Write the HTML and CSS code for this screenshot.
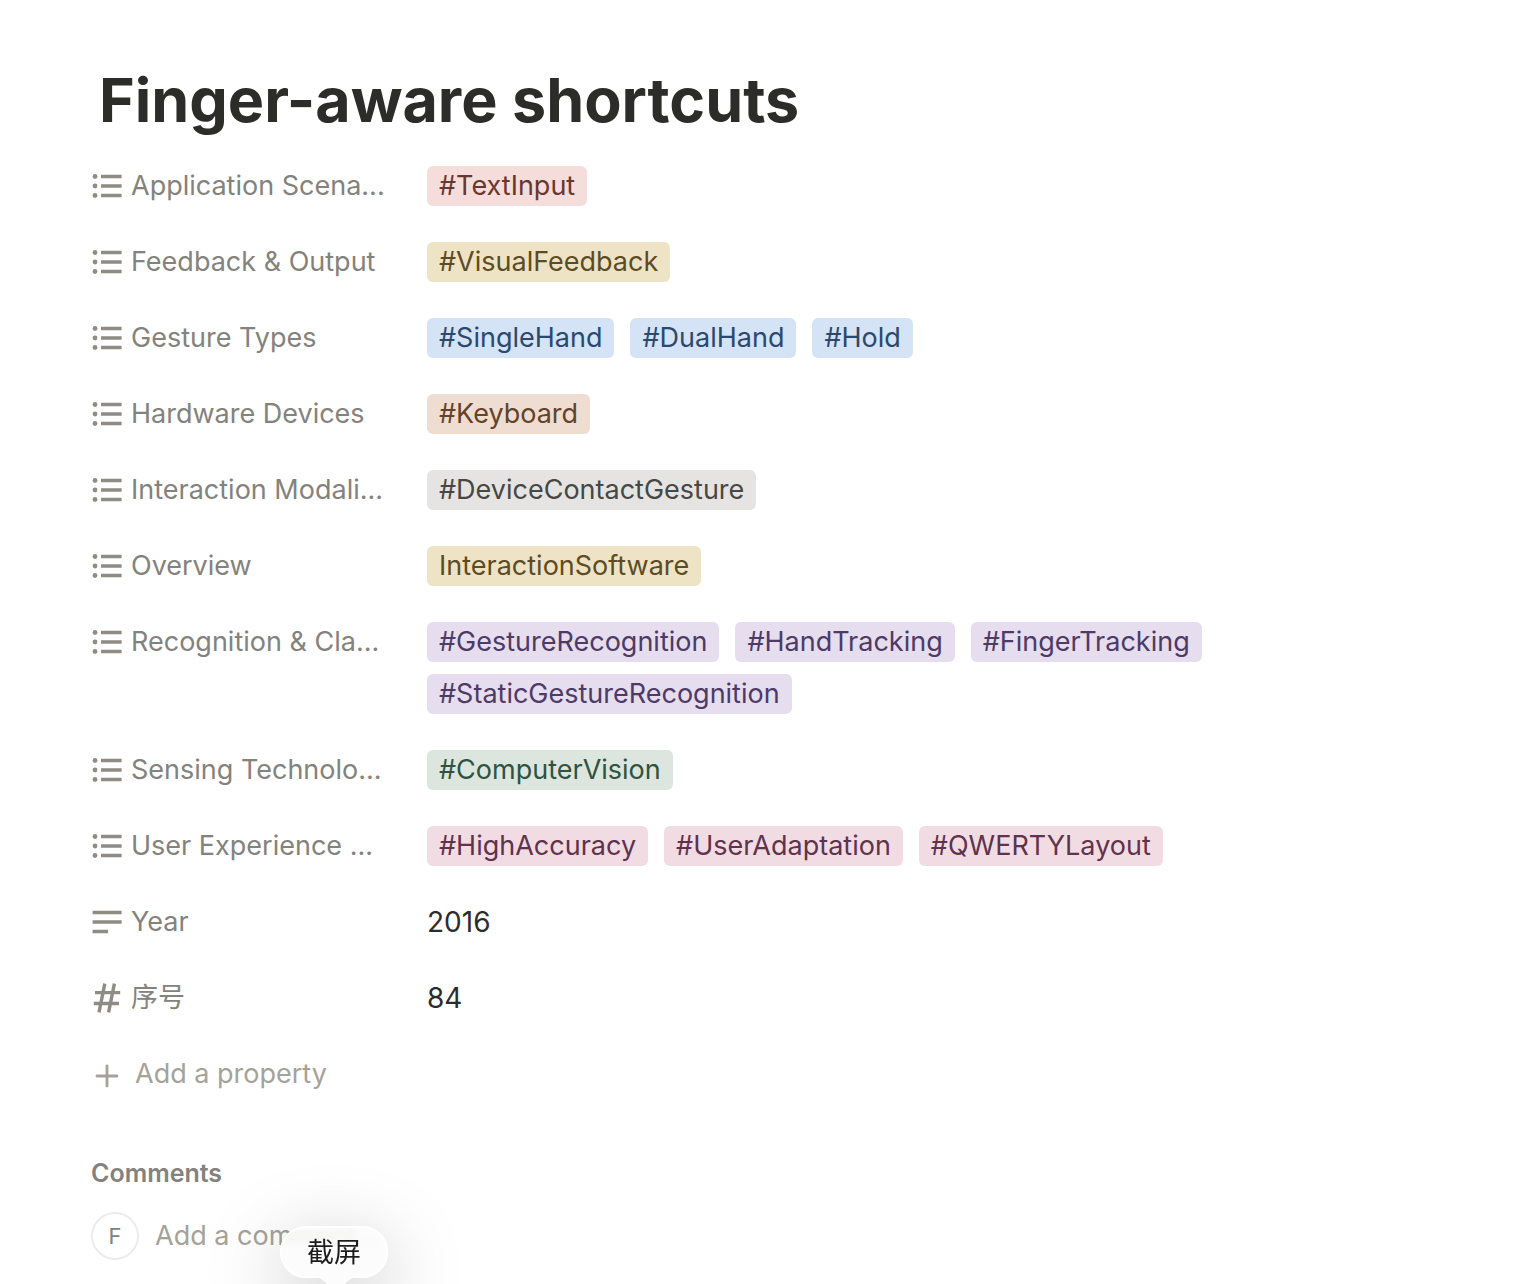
FILE: index.html
```html
<!DOCTYPE html>
<html lang="en">
<head>
<meta charset="utf-8">
<title>Finger-aware shortcuts</title>
<link rel="stylesheet" href="styles.css">
</head>
<body>
<svg class="sprite" aria-hidden="true">
  <symbol id="icon-list" viewBox="0 0 32 32">
    <circle cx="4" cy="6.5" r="2.4"/><circle cx="4" cy="16" r="2.4"/><circle cx="4" cy="25.5" r="2.4"/>
    <path d="M10 4.8h20.6v3.5H10zM10 14.3h20.6v3.5H10zM10 23.8h20.6v3.5H10z"/>
  </symbol>
  <symbol id="icon-text" viewBox="0 0 32 32">
    <path d="M1.6 4.8h29v3.5h-29zM1.6 14.3h29v3.5h-29zM1.6 23.8h15.4v3.5H1.6z"/>
  </symbol>
  <symbol id="icon-number" viewBox="0 0 32 32">
    <path d="M13.8 1.6 8 30.4M23.4 1.6l-5.8 28.8M4 10.6h25.2M2.8 21.5H28" fill="none" stroke="currentColor" stroke-width="3.4"/>
  </symbol>
  <symbol id="icon-plus" viewBox="0 0 32 32">
    <path d="M16 8v20M6 18h20" fill="none" stroke="currentColor" stroke-width="2.8" stroke-linecap="round"/>
  </symbol>
</svg>
<main class="page">
  <h1 class="title">Finger-aware shortcuts</h1>
  <dl class="properties">
    <div class="property">
      <dt class="name"><svg class="icon"><use href="#icon-list"/></svg>Application Scena...</dt>
      <dd class="value"><span class="tag red">#TextInput</span></dd>
    </div>
    <div class="property">
      <dt class="name"><svg class="icon"><use href="#icon-list"/></svg>Feedback &amp; Output</dt>
      <dd class="value"><span class="tag yellow">#VisualFeedback</span></dd>
    </div>
    <div class="property">
      <dt class="name"><svg class="icon"><use href="#icon-list"/></svg>Gesture Types</dt>
      <dd class="value"><span class="tag blue">#SingleHand</span><span class="tag blue">#DualHand</span><span class="tag blue">#Hold</span></dd>
    </div>
    <div class="property">
      <dt class="name"><svg class="icon"><use href="#icon-list"/></svg>Hardware Devices</dt>
      <dd class="value"><span class="tag orange">#Keyboard</span></dd>
    </div>
    <div class="property">
      <dt class="name"><svg class="icon"><use href="#icon-list"/></svg>Interaction Modali...</dt>
      <dd class="value"><span class="tag gray">#DeviceContactGesture</span></dd>
    </div>
    <div class="property">
      <dt class="name"><svg class="icon"><use href="#icon-list"/></svg>Overview</dt>
      <dd class="value"><span class="tag yellow">InteractionSoftware</span></dd>
    </div>
    <div class="property">
      <dt class="name"><svg class="icon"><use href="#icon-list"/></svg>Recognition &amp; Cla...</dt>
      <dd class="value"><span class="tag purple">#GestureRecognition</span><span class="tag purple">#HandTracking</span><span class="tag purple">#FingerTracking</span><span class="tag purple">#StaticGestureRecognition</span></dd>
    </div>
    <div class="property">
      <dt class="name"><svg class="icon"><use href="#icon-list"/></svg>Sensing Technolo...</dt>
      <dd class="value"><span class="tag green">#ComputerVision</span></dd>
    </div>
    <div class="property">
      <dt class="name"><svg class="icon"><use href="#icon-list"/></svg>User Experience ...</dt>
      <dd class="value"><span class="tag pink">#HighAccuracy</span><span class="tag pink">#UserAdaptation</span><span class="tag pink">#QWERTYLayout</span></dd>
    </div>
    <div class="property">
      <dt class="name"><svg class="icon"><use href="#icon-text"/></svg>Year</dt>
      <dd class="value number">2016</dd>
    </div>
    <div class="property">
      <dt class="name"><svg class="icon"><use href="#icon-number"/></svg><span lang="zh">序号</span></dt>
      <dd class="value number">84</dd>
    </div>
  </dl>
  <button class="add" type="button"><svg class="icon"><use href="#icon-plus"/></svg>Add a property</button>
  <section class="comments">
    <h2 class="heading">Comments</h2>
    <form class="composer">
      <span class="avatar">F</span>
      <input class="comment" type="text" placeholder="Add a comment..." aria-label="Add a comment">
      <div class="tooltip" role="tooltip" lang="zh">截屏<svg class="tail" viewBox="0 0 48 16"><path d="M0 0h48C36 1 32 12 24 12S12 1 0 0z"/></svg></div>
    </form>
  </section>
</main>
</body>
</html>
```
FILE: styles.css
```css
* { box-sizing: border-box; }

body {
  margin: 0;
  background: #fff;
  color: #2c2c2b;
  font: 27px/40px Inter, "Noto Sans CJK SC", sans-serif;
}

.sprite { position: absolute; width: 0; height: 0; }

.page {
  min-height: 100vh;
  padding: 60px 91px 24px;
  overflow: hidden;
}

.title {
  margin: 0 0 12px;
  padding-left: 8px;
  font-size: 61px;
  line-height: 80px;
  font-weight: 700;
}

.properties {
  display: flex;
  flex-direction: column;
  gap: 8px;
  margin: 0;
}

.property {
  display: grid;
  grid-template-columns: 296px minmax(0, 800px);
  column-gap: 40px;
  padding: 14px 0;
}

.name {
  display: flex;
  align-items: center;
  gap: 8px;
  height: 40px;
  color: #83827d;
  white-space: nowrap;
}

.icon {
  flex: none;
  width: 32px;
  height: 32px;
  fill: currentColor;
}

.name .icon { color: #8e8c85; }

.value {
  display: flex;
  flex-wrap: wrap;
  gap: 12px 16px;
  margin: 0;
}

.number { font-size: 28px; }

.tag {
  padding: 0 12px;
  border-radius: 6px;
  white-space: nowrap;
}

.red { background: #f5dddb; color: #6a3630; }
.yellow { background: #efe3c5; color: #5c4c26; }
.blue { background: #d5e3f6; color: #2b486e; }
.orange { background: #f0ddd1; color: #63432a; }
.gray { background: #e5e4e2; color: #484744; }
.purple { background: #e6ddef; color: #4d3a66; }
.green { background: #dde6de; color: #2f5340; }
.pink { background: #f2dce3; color: #60324b; }

.add {
  display: flex;
  align-items: center;
  gap: 12px;
  height: 68px;
  margin-top: 8px;
  padding: 0;
  border: 0;
  background: none;
  color: #a5a299;
  font: inherit;
}

.comments { margin-top: 45px; }

.heading {
  margin: 0;
  color: #83827d;
  font-size: 25px;
  line-height: 40px;
  font-weight: 600;
}

.composer {
  position: relative;
  display: flex;
  align-items: center;
  gap: 16px;
  margin-top: 19px;
}

.avatar {
  flex: none;
  width: 48px;
  height: 48px;
  border: 2px solid #ececeb;
  border-radius: 50%;
  color: #83827d;
  font-size: 22px;
  line-height: 44px;
  text-align: center;
}

.comment {
  flex: 1;
  min-width: 0;
  height: 40px;
  padding: 0;
  border: 0;
  outline: 0;
  background: none;
  color: inherit;
  font: inherit;
}

.comment::placeholder { color: #a5a299; opacity: 1; }

.tooltip {
  position: absolute;
  top: 14px;
  left: 189px;
  width: 108px;
  height: 52px;
  border: 2px solid #fff;
  border-radius: 26px;
  background: rgb(252 252 252 / 84%);
  backdrop-filter: blur(4px);
  box-shadow: 0 20px 80px rgb(0 0 0 / 26%);
  color: #1c1c1c;
  font-size: 27px;
  line-height: 50px;
  text-align: center;
}

.tail {
  position: absolute;
  top: 48px;
  left: 30px;
  width: 48px;
  height: 16px;
  fill: #fcfcfc;
}
```
